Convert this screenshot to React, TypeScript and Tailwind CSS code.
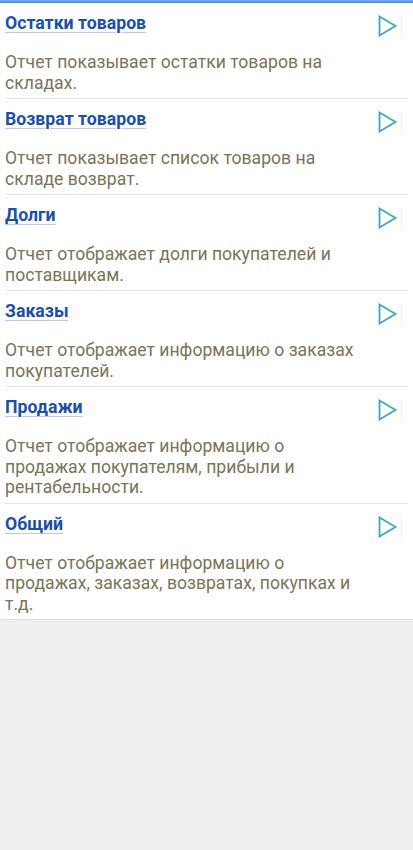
const reports = [
  {title: 'Остатки товаров', text: 'Отчет показывает остатки товаров на складах.'},
  {title: 'Возврат товаров', text: 'Отчет показывает список товаров на складе возврат.'},
  {title: 'Долги', text: 'Отчет отображает долги покупателей и поставщикам.'},
  {title: 'Заказы', text: 'Отчет отображает информацию о заказах покупателей.'},
  {title: 'Продажи', text: 'Отчет отображает информацию о продажах покупателям, прибыли и рентабельности.'},
  {title: 'Общий', text: 'Отчет отображает информацию о продажах, заказах, возвратах, покупках и т.д.'}
];

function PlayIcon() {
  return (
    <svg width="20" height="22" viewBox="0 0 20 22" fill="none">
      <path d="M1.5 1.5 L1.5 20.5 L17.5 11 Z" stroke="#3ea8b8" strokeWidth="1.8" strokeLinejoin="miter" />
    </svg>
  );
}

export default function App() {
  return (
    <div className="flex min-h-[850px] flex-col bg-[#efefef] font-['Roboto',sans-serif]">
      <div className="h-[3px] bg-gradient-to-b from-[#7fb0f5] to-[#3f7fe6]" />
      <div className="bg-white">
        {reports.map((item, index) => {
          const isLast = index === reports.length - 1;

          return (
            <div
              key={item.title}
              className={isLast ? 'border-b border-[#dcdcdc]' : 'mx-[5px] border-b border-[#e3e3e3]'}
            >
              <div className={isLast ? 'px-[5px] pb-[5px] pt-[9px]' : 'pb-[5px] pt-[9px]'}>
                <div className="flex h-[22px] items-start justify-between">
                  <a className="text-[17.7px] leading-[22px] font-bold text-[#1c4fa8] underline decoration-[#b9c9e0] decoration-1 underline-offset-[3px]">
                    {item.title}
                  </a>
                  <div className="mr-[6px] mt-[3px] flex items-center">
                    <PlayIcon />
                    <div className="ml-[3px] h-[20px] w-px bg-[#eeeeee]" />
                  </div>
                </div>
                <p className="mt-[18px] pr-[50px] text-[17.6px] leading-[20.5px] text-[#7b7355]">{item.text}</p>
              </div>
            </div>
          );
        })}
      </div>
    </div>
  );
}
